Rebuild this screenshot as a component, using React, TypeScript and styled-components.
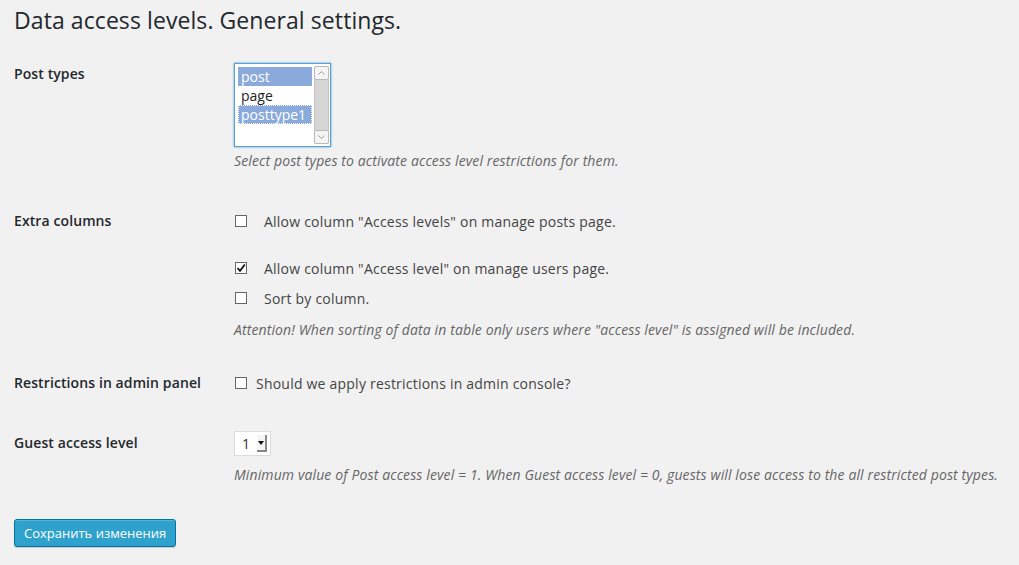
import styled, { createGlobalStyle } from 'styled-components';

const GlobalStyle = createGlobalStyle`
  body {
    margin: 0;
    background: #f1f1f1;
    font-family: "Open Sans", "Liberation Sans", sans-serif;
    color: #444;
  }
`;

const Page = styled.div`
  padding: 6px 14px 20px;
`;

const Title = styled.h1`
  margin: 0;
  font-size: 23px;
  line-height: 29px;
  font-weight: 400;
  letter-spacing: 0.08px;
  color: #23282d;
`;

const Form = styled.div`
  display: flex;
  flex-direction: column;
  margin-top: 10px;
`;

const Row = styled.div<{ $bottom: number }>`
  display: flex;
  padding-bottom: ${({ $bottom }) => $bottom}px;
`;

const Label = styled.div`
  width: 220px;
  flex-shrink: 0;
  padding-top: 20px;
  font-size: 14px;
  line-height: 18px;
  font-weight: 600;
  letter-spacing: 0.1px;
  color: #23282d;
`;

const Field = styled.div<{ $top: number }>`
  display: flex;
  flex-direction: column;
  align-items: flex-start;
  padding-top: ${({ $top }) => $top}px;
`;

const Description = styled.p<{ $top: number }>`
  margin: ${({ $top }) => $top}px 0 0;
  font-size: 14px;
  line-height: 18px;
  font-style: italic;
  letter-spacing: 0.12px;
  color: #666;
`;

const ListBox = styled.div`
  width: 97px;
  height: 84px;
  box-sizing: border-box;
  border: 1px solid #5b9dd9;
  box-shadow: 0 0 2px rgba(30, 140, 190, 0.8);
  background: #fff;
  display: flex;
  padding: 2px 1px 2px 3px;
`;

const Options = styled.div`
  flex: 1;
  display: flex;
  flex-direction: column;
  padding-top: 1px;
`;

const Option = styled.div<{ $selected?: boolean; $focused?: boolean }>`
  height: 19px;
  box-sizing: border-box;
  padding-left: 2px;
  font-size: 14px;
  line-height: 17px;
  color: ${({ $selected }) => ($selected ? '#fff' : '#222')};
  background: ${({ $selected }) => ($selected ? '#8aaadb' : 'transparent')};
  border: 1px ${({ $focused }) => ($focused ? 'dotted #fff' : 'solid transparent')};
  margin-right: 2px;
`;

const ScrollBar = styled.div`
  width: 15px;
  display: flex;
  flex-direction: column;
  background: #d6d6d6;
  border-radius: 2px;
`;

const ScrollButton = styled.div`
  height: 14px;
  box-sizing: border-box;
  border: 1px solid #b9b9b9;
  border-radius: 2px;
  background: #f4f4f4;
  display: flex;
  align-items: center;
  justify-content: center;
`;

const ScrollTrack = styled.div`
  flex: 1;
  border-left: 1px solid #c4c4c4;
  border-right: 1px solid #c4c4c4;
`;

const CheckLine = styled.label<{ $gap: number; $top?: number }>`
  display: flex;
  align-items: center;
  gap: ${({ $gap }) => $gap}px;
  height: 30px;
  margin-top: ${({ $top }) => $top ?? 0}px;
  padding-left: 1px;
  font-size: 14px;
  letter-spacing: 0.22px;
  color: #444;
`;

const Box = styled.span`
  width: 12px;
  height: 12px;
  box-sizing: border-box;
  border: 1px solid #666;
  background: #fff;
  display: flex;
  align-items: center;
  justify-content: center;
`;

const Select = styled.div`
  width: 37px;
  height: 25px;
  box-sizing: border-box;
  border: 1px solid #dcdcdc;
  background: #fff;
  display: flex;
  align-items: center;
  padding: 0 3px 0 7px;
  font-size: 14px;
  color: #333;
`;

const SelectValue = styled.span`
  flex: 1;
`;

const SelectArrow = styled.span`
  width: 10px;
  height: 17px;
  box-sizing: border-box;
  background: #f4f4f4;
  border-right: 2px solid #888;
  border-bottom: 2px solid #888;
  display: flex;
  align-items: center;
  justify-content: center;
`;

const Button = styled.button`
  margin-top: 35px;
  height: 28px;
  padding: 0 9px;
  border: 1px solid #0074a2;
  border-radius: 3px;
  background: #2ea2cc;
  color: #fff;
  font-family: "Open Sans", "Liberation Sans", sans-serif;
  font-size: 13px;
  line-height: 26px;
  box-shadow: inset 0 1px 0 rgba(120, 200, 230, 0.5), 0 1px 0 rgba(0, 0, 0, 0.15);
  cursor: pointer;
`;

const Check = ({ checked }: { checked?: boolean }) => (
  <Box>
    {checked && (
      <svg width="10" height="10" viewBox="0 0 10 10">
        <path d="M1.5 5 L4 7.8 L8.8 1.5" fill="none" stroke="#111" strokeWidth="1.8" />
      </svg>
    )}
  </Box>
);

const Arrow = ({ up }: { up?: boolean }) => (
  <svg width="7" height="4" viewBox="0 0 7 4">
    <path d={up ? 'M0.5 3.5 L3.5 0.5 L6.5 3.5' : 'M0.5 0.5 L3.5 3.5 L6.5 0.5'} fill="none" stroke="#999" strokeWidth="1" />
  </svg>
);

export default function App() {
  return (
    <>
      <GlobalStyle />
      <Page>
        <Title>Data access levels. General settings.</Title>
        <Form>
          <Row $bottom={22}>
            <Label>Post types</Label>
            <Field $top={18}>
              <ListBox>
                <Options>
                  <Option $selected>post</Option>
                  <Option>page</Option>
                  <Option $selected $focused>posttype1</Option>
                </Options>
                <ScrollBar>
                  <ScrollButton>
                    <Arrow up />
                  </ScrollButton>
                  <ScrollTrack />
                  <ScrollButton>
                    <Arrow />
                  </ScrollButton>
                </ScrollBar>
              </ListBox>
              <Description $top={5}>Select post types to activate access level restrictions for them.</Description>
            </Field>
          </Row>
          <Row $bottom={15}>
            <Label>Extra columns</Label>
            <Field $top={14}>
              <CheckLine $gap={17}>
                <Check />
                Allow column "Access levels" on manage posts page.
              </CheckLine>
              <CheckLine $gap={17} $top={17}>
                <Check checked />
                Allow column "Access level" on manage users page.
              </CheckLine>
              <CheckLine $gap={17}>
                <Check />
                Sort by column.
              </CheckLine>
              <Description $top={8}>
                Attention! When sorting of data in table only users where "access level" is assigned will be included.
              </Description>
            </Field>
          </Row>
          <Row $bottom={16}>
            <Label>Restrictions in admin panel</Label>
            <Field $top={14}>
              <CheckLine $gap={9}>
                <Check />
                Should we apply restrictions in admin console?
              </CheckLine>
            </Field>
          </Row>
          <Row $bottom={0}>
            <Label>Guest access level</Label>
            <Field $top={17}>
              <Select>
                <SelectValue>1</SelectValue>
                <SelectArrow>
                  <svg width="6" height="4" viewBox="0 0 6 4">
                    <path d="M0 0 L6 0 L3 4 Z" fill="#111" />
                  </svg>
                </SelectArrow>
              </Select>
              <Description $top={10}>
                Minimum value of Post access level = 1. When Guest access level = 0, guests will lose access to the all restricted post types.
              </Description>
            </Field>
          </Row>
        </Form>
        <Button>Сохранить изменения</Button>
      </Page>
    </>
  );
}
